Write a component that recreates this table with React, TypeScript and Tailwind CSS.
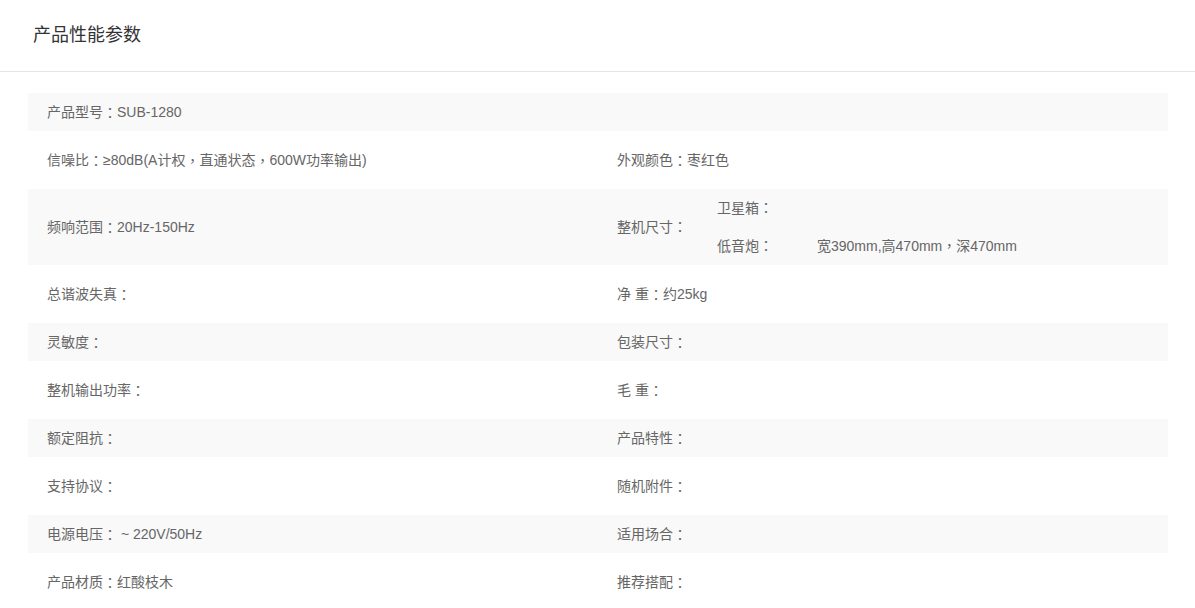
import React from 'react';

type Cell = { label: string; value?: string };

const rows: Array<[Cell, Cell | null]> = [
  [{ label: '产品型号', value: 'SUB-1280' }, null],
  [{ label: '信噪比', value: '≥80dB(A计权，直通状态，600W功率输出)' }, { label: '外观颜色', value: '枣红色' }],
  [{ label: '频响范围', value: '20Hz-150Hz' }, { label: '整机尺寸' }],
  [{ label: '总谐波失真' }, { label: '净 重', value: '约25kg' }],
  [{ label: '灵敏度' }, { label: '包装尺寸' }],
  [{ label: '整机输出功率' }, { label: '毛 重' }],
  [{ label: '额定阻抗' }, { label: '产品特性' }],
  [{ label: '支持协议' }, { label: '随机附件' }],
  [{ label: '电源电压', value: ' ~ 220V/50Hz' }, { label: '适用场合' }],
  [{ label: '产品材质', value: '红酸枝木' }, { label: '推荐搭配' }],
];

// centred full-width punctuation, the way the reference renders it
function Punct({ ch }: { ch: string }) {
  return <span style={{ fontFamily: '"Noto Sans CJK TC", sans-serif' }}>{ch}</span>;
}

function withPunct(text: string) {
  return text.split(/(，)/).map((part, i) => (part === '，' ? <Punct key={i} ch="，" /> : part));
}

function SizeTable() {
  return (
    <div className="flex items-center">
      <span className="w-[100px] shrink-0">整机尺寸<Punct ch="：" /></span>
      <div className="flex flex-col">
        <div className="flex h-[38px] items-center">
          <span className="w-[100px]">卫星箱<Punct ch="：" /></span>
        </div>
        <div className="flex h-[38px] items-center">
          <span className="w-[100px]">低音炮<Punct ch="：" /></span>
          <span>{withPunct('宽390mm,高470mm，深470mm')}</span>
        </div>
      </div>
    </div>
  );
}

function CellView({ cell }: { cell: Cell | null }) {
  if (!cell) return <div className="w-[570px] px-[19px]" />;
  if (cell.label === '整机尺寸') {
    return <div className="w-[570px] px-[19px]"><SizeTable /></div>;
  }
  return (
    <div className="flex w-[570px] items-center px-[19px] whitespace-pre">
      {cell.label}<Punct ch="：" />{cell.value ? withPunct(cell.value) : null}
    </div>
  );
}

export default function App() {
  return (
    <div
      className="min-h-[608px] bg-white text-[14px] text-[#666]"
      style={{ fontFamily: '"Liberation Sans", "Noto Sans CJK SC", sans-serif' }}
    >
      <div className="flex h-[72px] items-center border-b border-[#e5e5e5] pl-[33px] text-[18px] text-[#333]">
        产品性能参数
      </div>
      <div className="mx-[28px] mt-[21px] w-[1140px]">
        {rows.map((row, i) => (
          <div
            key={i}
            className={`mb-[10px] flex ${i === 2 ? 'h-[76px]' : 'h-[38px]'} ${i % 2 === 0 ? 'bg-[#f9f9f9]' : 'bg-white'}`}
          >
            <CellView cell={row[0]} />
            <CellView cell={row[1]} />
          </div>
        ))}
      </div>
    </div>
  );
}
